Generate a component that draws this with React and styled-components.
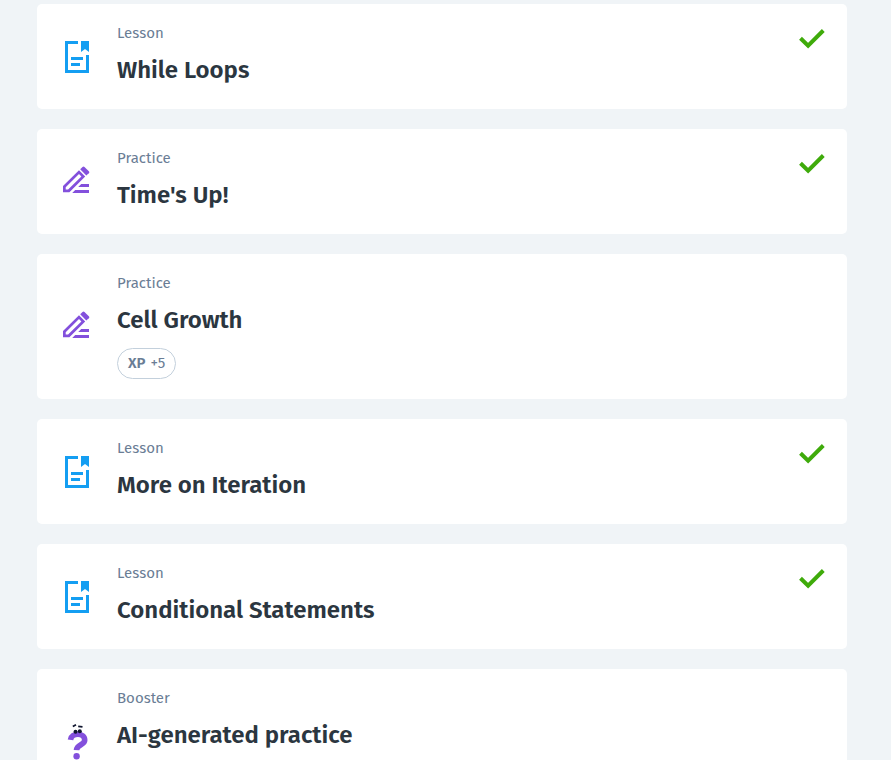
import React from "react";
import styled, { createGlobalStyle, css } from "styled-components";

const GlobalStyle = createGlobalStyle`
  *, *::before, *::after { box-sizing: border-box; }
  body {
    margin: 0;
    background: #f0f4f7;
    color: #2b3640;
    font-family: "Fira Sans", "Noto Sans CJK SC", "Noto Sans", sans-serif;
  }
`;

const List = styled.ul`
  display: flex;
  flex-direction: column;
  gap: 20px;
  margin: 0;
  padding: 4px 44px 0 37px;
  list-style: none;
`;

const Card = styled.li`
  display: flex;
  align-items: center;
  padding: 20px;
  border-radius: 5px;
  background: #fff;
  ${({ $tall }) => $tall && css`
    min-height: 145px;
    align-items: stretch;
  `}
`;

const IconSlot = styled.div`
  display: flex;
  flex: none;
  align-items: center;
  justify-content: center;
  width: 40px;
  margin-right: 20px;
`;

const Body = styled.div`
  flex: 1;
  min-width: 0;
`;

const Kind = styled.p`
  margin: 0 0 10px;
  color: #6a7d95;
  font-size: 15px;
  line-height: 18px;
`;

const Title = styled.h2`
  margin: 0;
  font-size: 24px;
  font-weight: 600;
  line-height: 37px;
`;

const Reward = styled.div`
  display: inline-flex;
  align-items: center;
  gap: 5px;
  height: 31px;
  margin-top: 9px;
  padding: 0 10px 1px;
  border: 1px solid #c3d0dc;
  border-radius: 16px;
  color: #6a7d95;
  font-size: 15px;
  vertical-align: top;
`;

const RewardLabel = styled.span`
  font-weight: 600;
`;

const Done = styled.div`
  display: flex;
  flex: none;
  align-self: flex-start;
  padding: 4px 2px 0 0;
`;

const LessonIcon = () => (
  <svg width="26" height="34" viewBox="64 40 26 34" fill="#149ef2" aria-hidden="true">
    <path d="M65 41h13v3H68v26h18V55h3v18H65z" />
    <path d="M81 41h8v11l-4-3-4 3z" />
    <path d="M71 57h12v3H71zM71 63h9v3h-9z" />
  </svg>
);

const PracticeIcon = () => (
  <svg width="28" height="31" viewBox="63 166 28 31" fill="#8350dc" aria-hidden="true">
    <path fillRule="evenodd" d="M79 170.300l6.200 6.200L69.400 192.300H63v-6.200zM79 174.100L65.700 187.300v2.300h2.400L81.400 176.500z" />
    <path d="M80.200 169.200l2.300-2.300q1-1 2 0l4.300 4.300q1 1 0 2l-2.500 2.300z" />
    <path d="M81.200 184h7.800v3H78.200zM75.200 190h13.800v3H72.200z" />
  </svg>
);

const BoosterIcon = () => (
  <svg width="26" height="38" viewBox="64 723 26 38" aria-hidden="true">
    <path d="M70.500 739.800C71.500 732.500 84.600 732.300 84.700 740C84.800 745.200 76.700 744.200 76.500 750.200" fill="none" stroke="#8350dc" strokeWidth="5.600" />
    <circle cx="76.600" cy="756.300" r="3.200" fill="#8350dc" />
    <circle cx="75.500" cy="731.700" r="2" fill="#10162f" />
    <circle cx="79.800" cy="731.300" r="2" fill="#10162f" />
    <path d="M72.800 726.500l3.200-1.800M78.200 726.300l4.300.5" fill="none" stroke="#10162f" strokeWidth="1.800" />
  </svg>
);

const CheckIcon = () => (
  <svg width="26" height="22" viewBox="799 28 26 22" role="img" aria-label="Completed">
    <path d="M800.500 38.300l7.600 7.400L823.300 30.500" fill="none" stroke="#3fab0b" strokeWidth="4" />
  </svg>
);

const icons = { Lesson: LessonIcon, Practice: PracticeIcon, Booster: BoosterIcon };

const items = [
  { kind: "Lesson", title: "While Loops", done: true },
  { kind: "Practice", title: "Time's Up!", done: true },
  { kind: "Practice", title: "Cell Growth", xp: 5 },
  { kind: "Lesson", title: "More on Iteration", done: true },
  { kind: "Lesson", title: "Conditional Statements", done: true },
  { kind: "Booster", title: "AI-generated practice", tall: true },
];

export default function App() {
  return (
    <>
      <GlobalStyle />
      <List>
        {items.map(({ kind, title, done, xp, tall }) => {
          const Icon = icons[kind];
          return (
            <Card key={title} $tall={tall}>
              <IconSlot><Icon /></IconSlot>
              <Body>
                <Kind>{kind}</Kind>
                <Title>{title}</Title>
                {xp && <Reward><RewardLabel>XP</RewardLabel><span>+{xp}</span></Reward>}
              </Body>
              {done && <Done><CheckIcon /></Done>}
            </Card>
          );
        })}
      </List>
    </>
  );
}
